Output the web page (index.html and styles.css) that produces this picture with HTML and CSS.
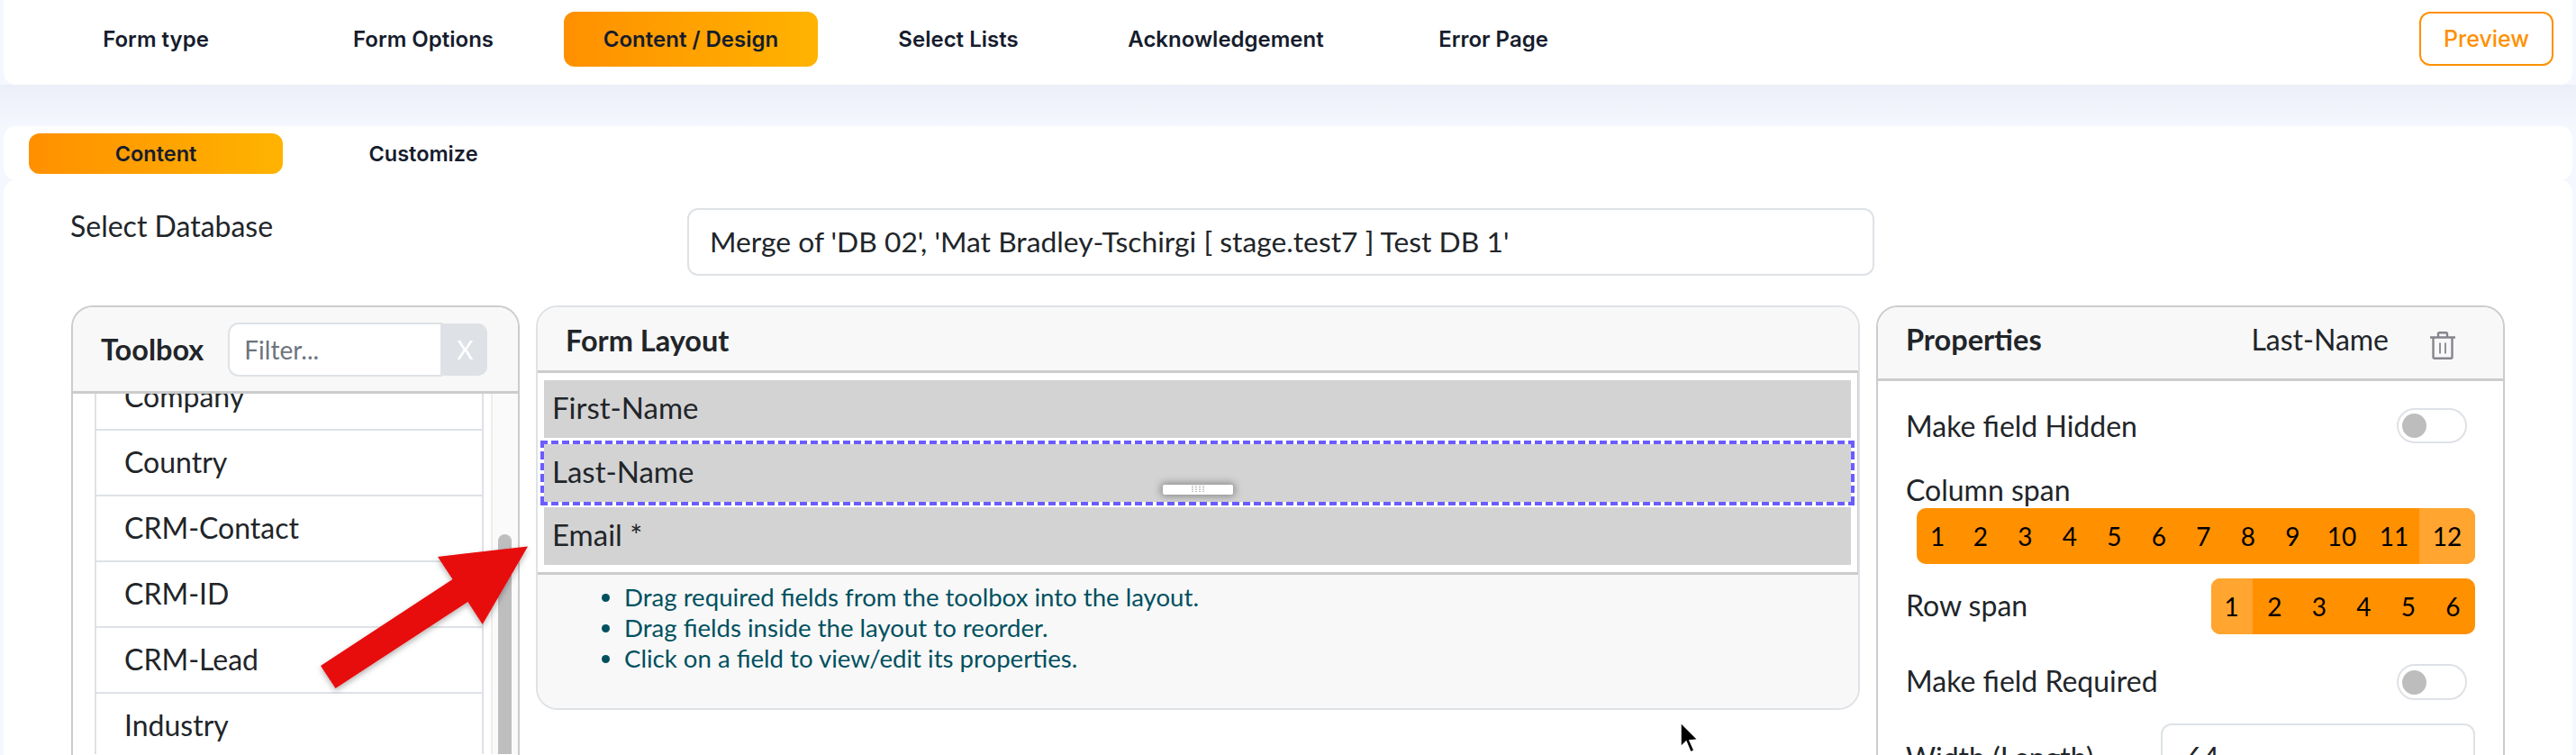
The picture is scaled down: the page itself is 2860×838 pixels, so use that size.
FILE: index.html
```html
<!DOCTYPE html>
<html lang="en">
<head>
<meta charset="utf-8">
<title>Form Designer</title>
<link rel="stylesheet" href="styles.css">
</head>
<body>
<div class="app">
  <nav class="topbar">
    <a class="step">Form type</a>
    <a class="step">Form Options</a>
    <a class="step active">Content / Design</a>
    <a class="step">Select Lists</a>
    <a class="step">Acknowledgement</a>
    <a class="step">Error Page</a>
    <button class="preview">Preview</button>
  </nav>
  <div class="gap"></div>
  <nav class="subbar">
    <a class="subtab active">Content</a>
    <a class="subtab">Customize</a>
  </nav>
  <main class="card">
    <div class="dbrow">
      <div class="dblabel">Select Database</div>
      <div class="dbinput">Merge of 'DB 02', 'Mat Bradley-Tschirgi [ stage.test7 ] Test DB 1'</div>
    </div>
    <div class="panels">
      <section class="panel toolbox">
        <header class="tool-head">
          <h2 class="title">Toolbox</h2>
          <div class="filter"><span class="filter-input">Filter...</span><span class="filter-x">X</span></div>
        </header>
        <div class="tool-body">
          <ul class="fields">
            <li>Company</li>
            <li>Country</li>
            <li>CRM-Contact</li>
            <li>CRM-ID</li>
            <li>CRM-Lead</li>
            <li>Industry</li>
          </ul>
          <div class="track"><div class="thumb"></div></div>
        </div>
      </section>
      <section class="panel layout">
        <header class="layout-head"><h2 class="title">Form Layout</h2></header>
        <div class="rows">
          <div class="row">First-Name</div>
          <div class="row selected">Last-Name
            <span class="handle"><svg width="14" height="8" viewBox="0 0 14 8"><path d="M1 0v8M5 0v8M9 0v8M13 0v8" stroke="#777" stroke-width="1" stroke-dasharray="1 1"/></svg></span>
          </div>
          <div class="row">Email *</div>
        </div>
        <div class="foot">
          <ul class="help">
            <li>Drag required fields from the toolbox into the layout.</li>
            <li>Drag fields inside the layout to reorder.</li>
            <li>Click on a field to view/edit its properties.</li>
          </ul>
        </div>
      </section>
      <section class="panel props">
        <header class="props-head">
          <h2 class="title">Properties</h2>
          <span class="props-name">Last-Name</span>
          <svg class="trash" width="30" height="31" viewBox="0 0 30 31" fill="none" stroke="#85858d" stroke-width="2.4"><path d="M1 6.5h28"/><path d="M10 6V2.5c0-.8.6-1.3 1.3-1.3h7.4c.7 0 1.3.5 1.3 1.3V6"/><path d="M4.5 7v21.3c0 1 .7 1.5 1.5 1.5h18c.8 0 1.500-.5 1.500-1.500V7"/><path d="M12 12.500v12M18 12.500v12" stroke-width="1.800"/></svg>
        </header>
        <div class="props-body">
          <div class="prop hidden-row"><span>Make field Hidden</span><span class="toggle"><i class="knob"></i></span></div>
          <div class="collabel">Column span</div>
          <div class="group colgroup">
            <span class="n first">1</span><span class="n">2</span><span class="n">3</span><span class="n">4</span><span class="n">5</span><span class="n">6</span><span class="n">7</span><span class="n">8</span><span class="n">9</span><span class="n ten">10</span><span class="n eleven">11</span><span class="n twelve on">12</span>
          </div>
          <div class="prop rowspan"><span class="lift">Row span</span>
            <div class="group"><span class="n first on">1</span><span class="n">2</span><span class="n">3</span><span class="n">4</span><span class="n">5</span><span class="n">6</span></div>
          </div>
          <div class="prop required"><span class="lift">Make field Required</span><span class="toggle"><i class="knob"></i></span></div>
          <div class="prop widthrow"><span class="widthlabel">Width (Length)</span><div class="widthinput">64</div></div>
        </div>
      </section>
    </div>
  </main>
  <svg class="annot" width="2860" height="838" viewBox="0 0 2860 838">
    <defs><filter id="ds" x="-20%" y="-20%" width="140%" height="140%"><feDropShadow dx="0" dy="3" stdDeviation="3" flood-color="#000" flood-opacity=".3"/></filter></defs>
    <polygon points="586,606.500 486,618 502.500,643 356,739 372.500,764 519.400,668 535.700,693" fill="#e80808" filter="url(#ds)"/>
    <path d="M1866 802l0 27 6-6 5 12 4-2-5-11 9-1z" fill="#000" stroke="#fff" stroke-width="1.500"/>
  </svg>
</div>
</body>
</html>
```

FILE: styles.css
```css
* { box-sizing: border-box; }
html, body { margin: 0; padding: 0; }
body { background: #f4f7fe; color: #212529; font-family: "Lato", "Liberation Sans", sans-serif; font-size: 32px; overflow: hidden; }
.app { position: relative; width: 2860px; height: 838px; overflow: hidden; }

.topbar { height: 94px; margin: 0 4px; padding: 13px 21px 0 28px; background: #fff; border-radius: 0 0 14px 14px; display: flex; align-items: flex-start; gap: 15px; }
.step, .subtab { width: 282px; display: flex; align-items: center; justify-content: center; color: #161c2d; font-family: "Inter", sans-serif; font-weight: 600; font-size: 24px; border-radius: 12px; white-space: nowrap; }
.step { height: 61px; }
.active { background: linear-gradient(90deg, #ff9000, #ffb300); }
.preview { margin-left: auto; width: 149px; height: 60px; background: #fff; border: 2px solid #ff9000; border-radius: 12px; color: #ff9000; font-family: "Inter", sans-serif; font-weight: 500; font-size: 25px; padding: 0; }
.gap { height: 46px; background: linear-gradient(180deg, #eceff8, #f4f7fe); }
.subbar { height: 60px; margin: 0 4px; padding: 8px 0 0 28px; background: #fff; border-radius: 14px; display: flex; align-items: flex-start; gap: 15px; }
.subtab { height: 45px; font-size: 23.5px; }
.card { height: 638px; margin: 0 4px; padding: 31px 0 0 75px; background: #fff; border-radius: 14px 14px 0 0; overflow: hidden; }

.dbrow { display: flex; align-items: flex-start; height: 75px; }
.dblabel { width: 685px; line-height: 40px; font-size: 32px; margin-left: -1px; flex: none; }
.dbinput { width: 1318px; height: 75px; border: 2px solid #dee2e6; border-radius: 12px; padding-left: 23px; line-height: 71px; font-size: 31.8px; }

.panels { display: flex; align-items: flex-start; gap: 18px; margin-top: 33px; }
.panel { border: 2px solid #ccc; border-radius: 24px 24px 0 0; background: #fff; overflow: hidden; flex: none; }
.title { margin: 0; font-size: 32.5px; font-weight: 700; line-height: 40px; }

.toolbox { width: 498px; height: 500px; border-bottom: 0; }
.tool-head { height: 96px; background: #f8f8f8; border-bottom: 3px solid #ccc; display: flex; align-items: center; padding-left: 31px; position: relative; z-index: 1; }
.filter { margin-left: 27px; display: flex; align-items: center; }
.filter-input { width: 238px; height: 60px; border: 2px solid #dee2e6; border-radius: 12px 0 0 12px; background: #fff; padding-left: 16px; line-height: 56px; font-size: 28px; color: #6c757d; }
.filter-x { width: 50px; height: 58px; background: #dee2e6; border-radius: 0 10px 10px 0; color: #fff; text-align: center; line-height: 58px; font-size: 28px; }
.tool-body { display: flex; height: 400px; overflow: hidden; }
.fields { list-style: none; margin: -32px 0 0 24px; padding: 0; width: 432px; flex: none; }
.fields li { height: 73px; border: 2px solid #dee2e6; border-top: 0; padding-left: 31px; line-height: 69px; font-size: 32px; }
.track { width: 30px; margin-left: 8px; background: #fafafa; border-left: 2px solid #eee; flex: none; padding: 156px 0 0 6px; }
.thumb { width: 15px; height: 300px; background: #bebebe; border-radius: 8px; }

.layout { width: 1470px; height: 449px; border-radius: 24px; border-color: #dee2e6; }
.layout-head { height: 73px; background: #f8f8f8; border-bottom: 3px solid #ccc; padding: 17px 0 0 31px; }
.rows { padding: 8px 7px 8px; display: flex; flex-direction: column; gap: 6.5px; border-bottom: 3px solid #ccc; border-right: 1px solid #ccc; }
.row { position: relative; height: 64px; background: #d3d3d3; padding-left: 9px; line-height: 61px; font-size: 33px; }
.selected::before { content: ""; position: absolute; inset: -4px; background:
  repeating-linear-gradient(90deg, #6a5cff 0 8px, transparent 8px 12px) top / 100% 4px no-repeat,
  repeating-linear-gradient(90deg, #6a5cff 0 8px, transparent 8px 12px) bottom / 100% 4px no-repeat,
  repeating-linear-gradient(180deg, #6a5cff 0 8px, transparent 8px 12.5px) left / 4px 100% no-repeat,
  repeating-linear-gradient(180deg, #6a5cff 0 8px, transparent 8px 12.5px) right / 4px 100% no-repeat; }
.handle { position: absolute; left: 50%; bottom: 8px; width: 78px; height: 11px; margin-left: -39px; background: #fff; border-radius: 2px; box-shadow: 0 0 8px 2px rgba(0,0,0,.35); display: flex; align-items: center; justify-content: center; }
.foot { height: 151px; background: #f8f8f8; padding-top: 8px; }
.help { margin: 0; padding: 0 0 0 96px; color: #00505f; font-size: 27.6px; line-height: 34px; }

.props { width: 698px; height: 520px; }
.props-head { height: 82px; background: #f8f8f8; border-bottom: 3px solid #ccc; display: flex; align-items: flex-start; padding: 16px 0 0 31px; }
.props-name { margin-left: auto; line-height: 40px; font-size: 32px; }
.trash { margin: 11px 52px 0 45px; flex: none; }
.props-body { padding: 30px 31px 0 31px; }
.prop { display: flex; align-items: center; justify-content: space-between; }
.lift { padding-bottom: 3px; }
.toggle { width: 78px; height: 39px; margin-right: 9px; border: 2px solid #dee2e6; border-radius: 20px; background: #fff; display: flex; align-items: center; padding-left: 4px; }
.knob { width: 27px; height: 27px; border-radius: 50%; background: #bdbdbd; }
.collabel { margin-top: 35px; line-height: 34px; margin-bottom: 3px; }
.group { display: flex; height: 62px; border-radius: 10px; overflow: hidden; background: #ff9000; flex: none; }
.colgroup { margin-left: 12px; width: 620px; }
.n { width: 49.5px; text-align: center; line-height: 62px; font-size: 28px; color: #000; }
.first { width: 46px; }
.ten { width: 60px; }
.eleven { width: 56px; }
.twelve { width: 62px; }
.on { background: #ffa530; }
.rowspan { margin-top: 16px; }
.required { margin-top: 32px; }
.required .toggle { height: 40px; }
.widthrow { margin-top: 25px; align-items: flex-start; }
.widthlabel { padding-top: 18px; }
.widthinput { width: 349px; height: 75px; border: 2px solid #dee2e6; border-radius: 12px; padding-left: 26px; line-height: 71px; }

.annot { position: absolute; left: 0; top: 0; pointer-events: none; }
```
